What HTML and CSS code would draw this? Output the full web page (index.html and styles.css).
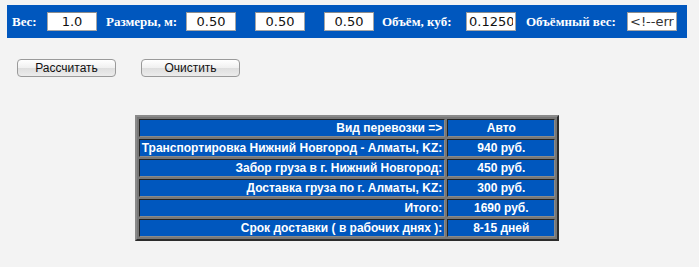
FILE: index.html
```html
<!DOCTYPE html>
<html lang="ru">
<head>
  <meta charset="UTF-8" />
  <title>Калькулятор доставки</title>
  <link rel="stylesheet" href="styles.css">
</head>
<body>
  <div class="bar">
    <span class="lbl lbl-ves">Вес:</span>
    <input class="num" type="text" value="1.0" />
    <span class="lbl lbl-size">Размеры, м:</span>
    <input class="num" type="text" value="0.50" />
    <input class="num gap" type="text" value="0.50" />
    <input class="num gap" type="text" value="0.50" />
    <span class="lbl lbl-vol">Объём, куб:</span>
    <input class="num" type="text" value="0.1250" />
    <span class="lbl lbl-vw">Объёмный вес:</span>
    <input class="num left" type="text" value="<!--error-->" />
  </div>

  <div class="buttons">
    <button type="button">Рассчитать</button>
    <button type="button">Очистить</button>
  </div>

  <table class="result">
    <tr><td class="name">Вид перевозки =&gt;</td><td class="val">Авто</td></tr>
    <tr><td class="name">Транспортировка Нижний Новгород - Алматы, KZ:</td><td class="val">940 руб.</td></tr>
    <tr><td class="name">Забор груза в г. Нижний Новгород:</td><td class="val">450 руб.</td></tr>
    <tr><td class="name">Доставка груза по г. Алматы, KZ:</td><td class="val">300 руб.</td></tr>
    <tr><td class="name">Итого:</td><td class="val">1690 руб.</td></tr>
    <tr><td class="name">Срок доставки ( в рабочих днях ):</td><td class="val">8-15 дней</td></tr>
  </table>
</body>
</html>
```

FILE: styles.css
```css
body { margin: 5px 12px 0 7px; background: #f3f3f3; font-family: "DejaVu Sans", sans-serif; }

.bar {
  display: flex;
  align-items: center;
  height: 33px;
  background: #0057be;
}
.lbl {
  color: white;
  font-family: "Liberation Serif", serif;
  font-weight: bold;
  font-size: 13px;
  white-space: nowrap;
}
.lbl-ves { margin-left: 5px; width: 35px; }
.lbl-size { margin-left: 9px; width: 80px; }
.lbl-vol { margin-left: 8px; width: 84px; }
.lbl-vw { margin-left: 10px; width: 101px; }

.num {
  width: 50px;
  height: 19px;
  box-sizing: border-box;
  margin: 0;
  padding: 0 2px;
  border: 1px solid #a6a6a6;
  border-top-color: #8c8c8c;
  background: white;
  font-family: "DejaVu Sans", sans-serif;
  font-size: 13px;
  color: #111;
  text-align: center;
}
.num.gap { margin-left: 19px; }
.num.left { text-align: left; color: #333; }

.buttons { display: flex; gap: 25px; margin: 21px 0 0 10px; }
.buttons button {
  width: 99px;
  height: 18px;
  padding: 0;
  border: 1px solid #9a9a9a;
  border-radius: 4px;
  background: linear-gradient(#ffffff, #f0f0f0 50%, #dedede 51%, #ececec);
  font-family: "Liberation Sans", Arial, sans-serif;
  font-size: 12px;
  color: #111;
}

.result {
  margin: 38px auto 0;
  border-collapse: separate;
  border-spacing: 2px;
  border: 2px solid;
  border-color: #8a8a8a #2b2b2b #2b2b2b #8a8a8a;
  background: #777;
}
.result td {
  height: 16px;
  padding: 0 2px;
  border: 1px solid;
  border-color: #222 #8a8a8a #8a8a8a #222;
  background: #0057be;
  color: white;
  font-family: "Liberation Sans", Arial, sans-serif;
  font-weight: bold;
  font-size: 12px;
  line-height: 16px;
  white-space: nowrap;
}
.result .name { width: 297px; text-align: right; }
.result .val { width: 102px; text-align: center; }
```
